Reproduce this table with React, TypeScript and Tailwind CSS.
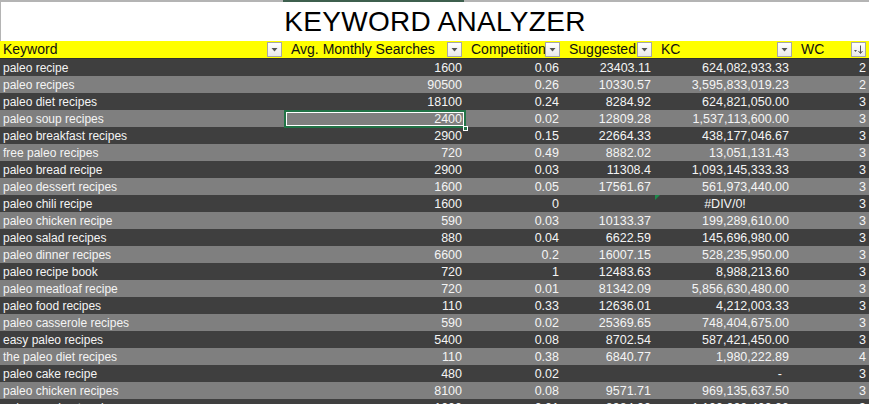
import React from "react";

type Row = [string, string, string, string, string, string];

const rows: Row[] = [
  ["paleo recipe", "1600", "0.06", "23403.11", "624,082,933.33", "2"],
  ["paleo recipes", "90500", "0.26", "10330.57", "3,595,833,019.23", "2"],
  ["paleo diet recipes", "18100", "0.24", "8284.92", "624,821,050.00", "3"],
  ["paleo soup recipes", "2400", "0.02", "12809.28", "1,537,113,600.00", "3"],
  ["paleo breakfast recipes", "2900", "0.15", "22664.33", "438,177,046.67", "3"],
  ["free paleo recipes", "720", "0.49", "8882.02", "13,051,131.43", "3"],
  ["paleo bread recipe", "2900", "0.03", "11308.4", "1,093,145,333.33", "3"],
  ["paleo dessert recipes", "1600", "0.05", "17561.67", "561,973,440.00", "3"],
  ["paleo chili recipe", "1600", "0", "", "#DIV/0!", "3"],
  ["paleo chicken recipe", "590", "0.03", "10133.37", "199,289,610.00", "3"],
  ["paleo salad recipes", "880", "0.04", "6622.59", "145,696,980.00", "3"],
  ["paleo dinner recipes", "6600", "0.2", "16007.15", "528,235,950.00", "3"],
  ["paleo recipe book", "720", "1", "12483.63", "8,988,213.60", "3"],
  ["paleo meatloaf recipe", "720", "0.01", "81342.09", "5,856,630,480.00", "3"],
  ["paleo food recipes", "110", "0.33", "12636.01", "4,212,003.33", "3"],
  ["paleo casserole recipes", "590", "0.02", "25369.65", "748,404,675.00", "3"],
  ["easy paleo recipes", "5400", "0.08", "8702.54", "587,421,450.00", "3"],
  ["the paleo diet recipes", "110", "0.38", "6840.77", "1,980,222.89", "4"],
  ["paleo cake recipe", "480", "0.02", "", "-", "3"],
  ["paleo chicken recipes", "8100", "0.08", "9571.71", "969,135,637.50", "3"],
  ["paleo crockpot recipes", "1000", "0.01", "8984.00", "1,100,000,400.00", "3"],
];

const FONT = { fontFamily: '"Liberation Sans", Arial, sans-serif' };

function FilterButton({ sort = false }: { sort?: boolean }) {
  return (
    <div className="absolute right-[3px] top-[1px] flex h-[15px] w-[15px] items-center justify-center border border-[#a6a6a6] bg-gradient-to-b from-[#ffffff] to-[#e9e9e9]">
      {sort ? (
        <svg width="11" height="11" viewBox="0 0 11 11">
          <path d="M1 6 L4 6 L2.5 8 Z" fill="#555" />
          <path d="M7.5 1.5 V9" stroke="#555" strokeWidth="1" />
          <path d="M5.5 7 L7.5 9.5 L9.5 7" stroke="#555" strokeWidth="1" fill="none" />
        </svg>
      ) : (
        <svg width="9" height="9" viewBox="0 0 9 9">
          <path d="M1.5 3 L7.5 3 L4.5 6.5 Z" fill="#555" />
        </svg>
      )}
    </div>
  );
}

function HeaderCell({ label, sort, first }: { label: string; sort?: boolean; first?: boolean }) {
  return (
    <div className="relative h-[17px] overflow-hidden">
      <div
        className={`whitespace-nowrap text-[14px] leading-[17px] text-[#111] ${first ? "pl-[3px]" : "pl-[6px]"}`}
      >
        {label}
      </div>
      <FilterButton sort={sort} />
    </div>
  );
}

export default function App() {
  return (
    <div className="h-[404px] w-[869px] overflow-hidden bg-white" style={FONT}>
      {/* top sheet edge */}
      <div className="flex h-[2px] w-full bg-[#b4b4b4]">
        <div className="ml-[283px] h-[2px] w-[181px] bg-[#3d5f4e]" />
      </div>
      {/* title */}
      <div className="flex h-[39px] items-center justify-center border-l border-[#b4b4b4]">
        <div className="text-[28px] leading-none tracking-[0.3px] text-black">KEYWORD ANALYZER</div>
      </div>
      {/* header */}
      <div className="grid grid-cols-[285px_180px_98px_92px_140px_74px] bg-[#ffff00]">
        <HeaderCell label="Keyword" first />
        <HeaderCell label="Avg. Monthly Searches" />
        <HeaderCell label="Competition" />
        <HeaderCell label="Suggested" />
        <HeaderCell label="KC" />
        <HeaderCell label="WC" sort />
      </div>
      <div className="h-px bg-[#303030]" />
      {/* rows */}
      <div className="flex flex-col">
        {rows.map((r, i) => (
          <div
            key={i}
            className={`grid h-[17px] grid-cols-[285px_180px_98px_92px_140px_74px] text-[12.5px] leading-[18px] text-[#f4f4f4] ${
              i % 2 === 0 ? "bg-[#3f3f3f]" : "bg-[#7f7f7f]"
            }`}
          >
            <div className="whitespace-nowrap pl-[3px] text-[12px]">{r[0]}</div>
            <div className="relative pr-[3px] text-right">
              {i === 3 && (
                <>
                  <div className="absolute inset-x-[-1px] inset-y-0 border-2 border-[#217346]">
                    <div className="h-full w-full border border-white" />
                  </div>
                  <div className="absolute bottom-[-3px] right-[-3px] h-[5px] w-[5px] border border-white bg-[#217346]" />
                </>
              )}
              <span className="relative">{r[1]}</span>
            </div>
            <div className="pr-[4px] text-right">{r[2]}</div>
            <div className="pr-[4px] text-right">{r[3]}</div>
            <div className="relative">
              {r[4] === "#DIV/0!" ? (
                <>
                  <div className="absolute left-0 top-0 h-0 w-0 border-r-[5px] border-t-[5px] border-r-transparent border-t-[#1e8a4c]" />
                  <div className="text-center">{r[4]}</div>
                </>
              ) : r[4] === "-" ? (
                <div className="pr-[13px] text-right">-</div>
              ) : (
                <div className="pr-[6px] text-right">{r[4]}</div>
              )}
            </div>
            <div className="pr-[3px] text-right">{r[5]}</div>
          </div>
        ))}
      </div>
    </div>
  );
}
